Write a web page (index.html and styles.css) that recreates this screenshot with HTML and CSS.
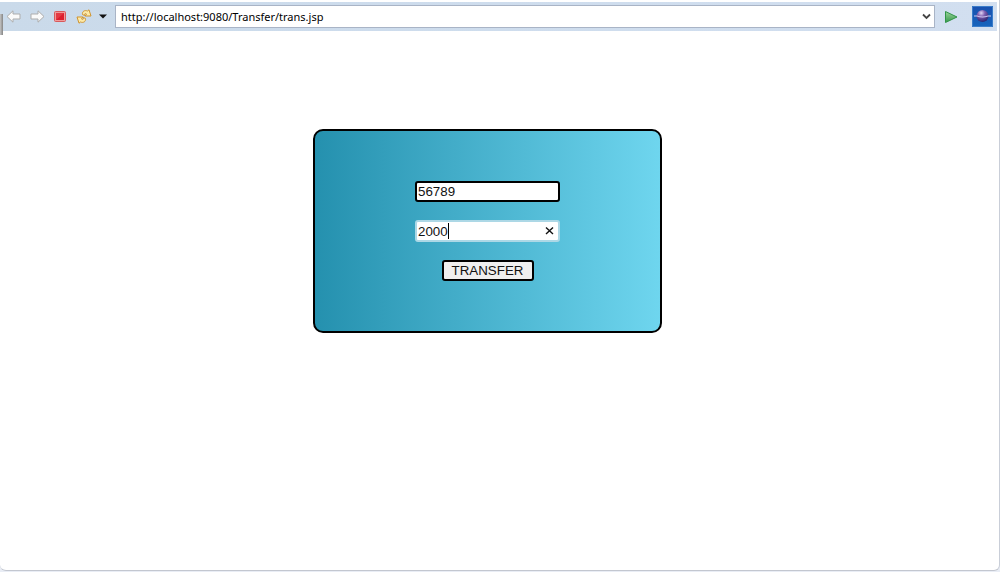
FILE: index.html
```html
<!DOCTYPE html>
<html lang="en">
<head>
<meta charset="utf-8">
<title>Transfer</title>
<link rel="stylesheet" href="styles.css">
</head>
<body>
<div class="browser">
  <header class="toolbar">
    <span class="grip"></span>
    <nav class="tools" aria-label="Navigation">
      <button class="tool" type="button" aria-label="Back">
        <svg width="16" height="16" viewBox="0 0 16 16"><path d="M1 7.500 7 1.800V5h7v5H7v3.200z" fill="#fafafa" stroke="#adadad" stroke-linejoin="round"/></svg>
      </button>
      <button class="tool" type="button" aria-label="Forward">
        <svg width="16" height="16" viewBox="0 0 16 16"><path d="M15 7.500 9 1.800V5H2v5h7v3.200z" fill="#fafafa" stroke="#adadad" stroke-linejoin="round"/></svg>
      </button>
      <button class="tool" type="button" aria-label="Stop">
        <svg width="16" height="16" viewBox="0 0 16 16"><rect x="2.500" y="2.500" width="11" height="10" rx="1" fill="#f09a9a" stroke="#d8595b"/><path d="M4 4h8v7H4z" fill="#dc1f2e"/><path d="M4 4h8L4 11z" fill="#e43a44"/></svg>
      </button>
      <button class="tool" type="button" aria-label="Refresh">
        <svg width="16" height="16" viewBox="0 0 16 16"><g fill="#fdeaa8" stroke="#d0942f" stroke-linejoin="round"><path d="M6.500 5.500C6 2.500 8.500.800 11.500 2L13 .800 15 7H9l1.500-1.900C9 4 8.300 5 8.500 6.500z"/><path d="M9.500 9.500c.5 3-2 4.700-5 3.500L3 14.200 1 8h6L5.500 9.900C7 11 7.700 10 7.500 8.500z"/></g></svg>
      </button>
      <button class="tool more" type="button" aria-label="Refresh options">
        <svg width="8" height="5" viewBox="0 0 8 5"><path d="M0 .5h8L4 4.500z" fill="#111"/></svg>
      </button>
    </nav>
    <div class="address">
      <input class="url" type="text" aria-label="Address" value="http://localhost:9080/Transfer/trans.jsp">
      <button class="tool history" type="button" aria-label="Address history">
        <svg width="9" height="7" viewBox="0 0 9 7"><path d="M1 1.500 4.500 5 8 1.500" fill="none" stroke="#444" stroke-width="1.800"/></svg>
      </button>
    </div>
    <button class="tool go" type="button" aria-label="Go">
      <svg width="14" height="14" viewBox="0 0 14 14"><defs><linearGradient id="g" x1="0" y1="0" x2="0" y2="1"><stop stop-color="#9bd49a"/><stop offset="1" stop-color="#36984b"/></linearGradient></defs><path d="M1.500 1.500 13 7l-11.500 5.500z" fill="url(#g)" stroke="#319448" stroke-linejoin="round"/></svg>
    </button>
    <svg class="logo" width="21" height="21" viewBox="0 0 21 21" role="img" aria-label="Browser"><defs><linearGradient id="b" x1="0" y1="0" x2="0" y2="1"><stop stop-color="#1950ae"/><stop offset="1" stop-color="#1765bd"/></linearGradient><radialGradient id="s" cx=".4" cy=".25" r=".75"><stop stop-color="#e0d6f4"/><stop offset=".4" stop-color="#8060b0"/><stop offset="1" stop-color="#2c2470"/></radialGradient></defs><path d="M0 0h21v21H0z" fill="url(#b)"/><path d="M.5 20.500V.5h20v20z" fill="none" stroke="#3a7cc9"/><circle cx="10.500" cy="10" r="6" fill="url(#s)"/><path d="M2 9.500h3q5.500 2 11 0h3v1h-3q-5.500 2-11 0H2z" fill="#cfc8f0"/></svg>
  </header>
  <main class="page">
    <form class="card">
      <input class="field" type="text" aria-label="Account number" value="56789">
      <div class="amount">
        <input class="field active" type="text" aria-label="Amount" value="2000">
        <span class="caret"></span>
        <button class="clear" type="button" aria-label="Clear">
          <svg width="9" height="9" viewBox="0 0 9 9"><path d="m1 1.500 7 6.500M8 1.500 1 8" stroke="#111" stroke-width="1.400"/></svg>
        </button>
      </div>
      <button class="submit" type="button">TRANSFER</button>
    </form>
  </main>
</div>
</body>
</html>
```
FILE: styles.css
```css
* { box-sizing: border-box; }
body {
  margin: 0;
  min-height: 100vh;
  display: flex;
  padding: 0 0 1px;
  background: #e9edf5;
  font-family: "Liberation Sans", Arial, sans-serif;
}
.browser {
  flex: 1;
  display: flex;
  flex-direction: column;
  padding: 2px 2px 0 0;
  background: #fff;
  border-right: 1px solid #c9ced8;
  border-bottom: 1px solid #c3c7d0;
  border-radius: 0 0 6px 6px;
}
.toolbar {
  position: relative;
  display: flex;
  align-items: center;
  height: 29px;
  padding: 0 4px 0 6px;
  background: linear-gradient(90deg, #cadaea, #d2dff0);
}
.grip {
  position: absolute;
  left: 0;
  top: 12px;
  width: 3px;
  height: 21px;
  background: linear-gradient(90deg, #c4c4c4, #858585);
}
.tools { display: flex; align-items: center; gap: 7px; width: 109px; }
.tool {
  display: flex;
  align-items: center;
  justify-content: center;
  padding: 0;
  border: 0;
  background: none;
}
.tools .tool:nth-child(3) { margin-right: 1px; }
.address {
  flex: 1;
  display: flex;
  align-items: center;
  height: 23px;
  padding: 0 3px 0 5px;
  background: #fff;
  border: 1px solid #a9b4c6;
}
.url {
  flex: 1;
  min-width: 0;
  padding: 0;
  border: 0;
  outline: 0;
  background: none;
  color: #000;
  font: 11px/16px "Noto Sans", "Segoe UI", sans-serif;
}
.go { margin: 0 14px 0 9px; }
.logo { flex: none; }
.page {
  flex: 1;
  display: flex;
  justify-content: center;
  align-items: flex-start;
  padding: 98px 22px 0 0;
}
.card {
  display: flex;
  flex-direction: column;
  align-items: center;
  gap: 18px;
  padding: 50px 100px;
  border: 2px solid #000;
  border-radius: 10px;
  background: linear-gradient(90deg, #2490ae, #6fd6ef) border-box;
}
.field {
  display: block;
  width: 145px;
  height: 21px;
  padding: 0 1px;
  border: 2px solid #000;
  border-radius: 3px;
  outline: 0;
  background: #fff;
  color: #111;
  font-family: "Liberation Sans", Arial, sans-serif;
}
.amount { position: relative; }
.active { height: 22px; border-color: #add8e6; }
.caret {
  position: absolute;
  left: 33px;
  top: 3px;
  width: 1px;
  height: 16px;
  background: #000;
}
.clear {
  position: absolute;
  right: 6px;
  top: 6px;
  display: flex;
  padding: 0;
  border: 0;
  background: none;
}
.submit {
  width: 92px;
  height: 21px;
  padding: 0;
  border: 2px solid #000;
  border-radius: 3px;
  background: #efefef;
  color: #111;
  font-family: "Liberation Sans", Arial, sans-serif;
}
```
